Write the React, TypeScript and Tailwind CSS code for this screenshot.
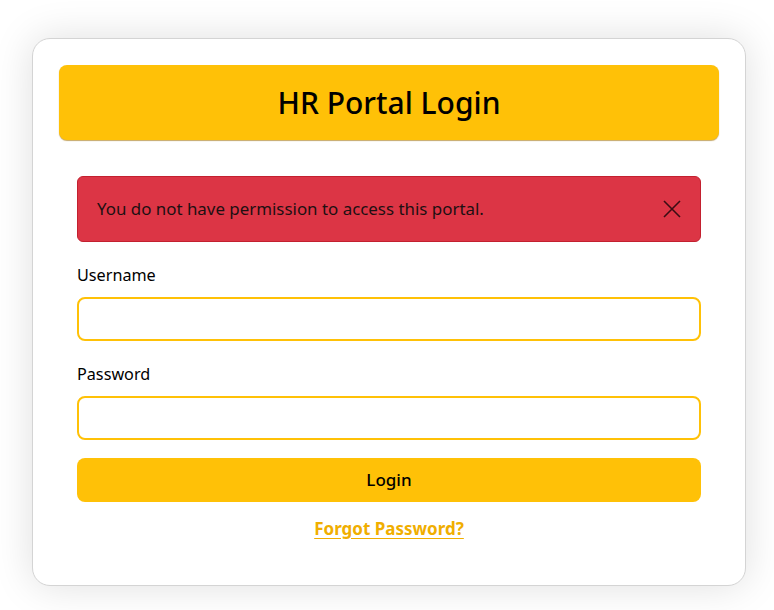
import React from "react";

export default function App() {
  return (
    <div className="w-[774px] h-[610px] bg-white overflow-hidden" style={{ fontFamily: '"Noto Sans", "Open Sans", sans-serif' }}>
      <div className="ml-[32px] mt-[38px] w-[714px] h-[548px] rounded-[18px] border border-[#d4d4d4] bg-white shadow-[0_0_40px_rgba(0,0,0,0.13)] px-[26px] pt-[26px]">
        <div className="h-[75px] rounded-[8px] bg-[#ffc107] shadow-[0_1px_1px_rgba(160,110,0,0.6)] flex items-center justify-center">
          <h1 className="text-[30px] font-medium text-black">HR Portal Login</h1>
        </div>
        <div className="px-[18px] pt-[36px]">
          <div className="h-[66px] rounded-[6px] bg-[#dc3545] border border-[#c3202f] flex items-center justify-between pl-[19px] pr-[18px]">
            <span className="text-[16.9px] text-[#1d1012]">You do not have permission to access this portal.</span>
            <svg width="20" height="20" viewBox="0 0 20 20">
              <path d="M2 2 L18 18 M18 2 L2 18" stroke="#3b0d13" strokeWidth="1.6" fill="none" />
            </svg>
          </div>
          <label className="block mt-[21px] leading-[24px] text-[16.2px] text-black">Username</label>
          <input className="block mt-[10px] w-full h-[44px] rounded-[8px] border-2 border-[#ffc107] bg-white outline-none" />
          <label className="block mt-[21px] leading-[24px] text-[16.2px] text-black">Password</label>
          <input type="password" className="block mt-[10px] w-full h-[44px] rounded-[8px] border-2 border-[#ffc107] bg-white outline-none" />
          <button className="block mt-[18px] w-full h-[44px] rounded-[8px] bg-[#ffc107] text-[17px] font-medium text-black">Login</button>
          <div className="mt-[15px] text-center leading-[24px]">
            <a className="text-[17px] font-bold text-[#f0ae00] underline underline-offset-[3px]">Forgot Password?</a>
          </div>
        </div>
      </div>
    </div>
  );
}
